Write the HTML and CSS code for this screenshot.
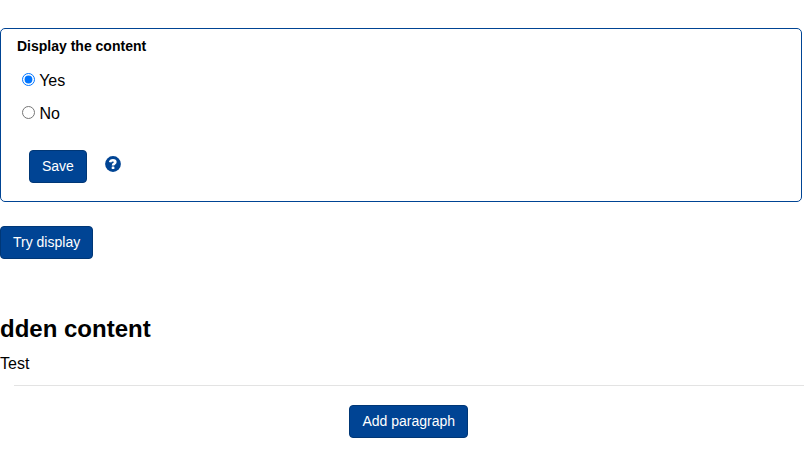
FILE: index.html
```html
<!DOCTYPE html>
<html lang="en">
<head>
<meta charset="utf-8">
<title>Content display</title>
<link rel="stylesheet" href="styles.css">
</head>
<body>
<form class="panel">
  <div class="panel-title">Display the content</div>
  <label class="option"><input type="radio" name="display" checked> Yes</label>
  <label class="option"><input type="radio" name="display"> No</label>
  <div class="actions">
    <button type="button" class="btn">Save</button>
    <svg class="help" viewBox="0 0 16 16" aria-hidden="true">
      <circle cx="8" cy="8" r="7.900" fill="#004494"/>
      <path d="M5.100 6.200C5.400 4.800 6.400 4.300 7.900 4.300c1.600 0 2.500.6 2.500 1.700 0 1.700-2.400 1.500-2.400 3.400" fill="none" stroke="#fff" stroke-width="2.500"/>
      <rect x="6.700" y="10.400" width="2.700" height="2.700" rx=".6" fill="#fff"/>
    </svg>
  </div>
</form>
<button type="button" class="btn">Try display</button>
<h2 class="heading">dden content</h2>
<p class="text">Test</p>
<div class="footer">
  <button type="button" class="btn">Add paragraph</button>
</div>
</body>
</html>
```

FILE: styles.css
```css
* {
  box-sizing: border-box;
}

body {
  margin: 0;
  padding-top: 28px;
  overflow: hidden;
  background: #fff;
  color: #000;
  font: 16px/24px "Liberation Sans", Arial, sans-serif;
}

.panel {
  width: 802px;
  height: 174px;
  margin-bottom: 24px;
  padding: 7px 16px 0;
  border: 1px solid #004494;
  border-radius: 5px;
}

.panel-title {
  margin-bottom: 13px;
  font-size: 14px;
  font-weight: 700;
  line-height: 20px;
}

.option {
  display: block;
  height: 24px;
  margin: 0 0 9px 5px;
}

.option input {
  width: 13px;
  height: 13px;
  margin: 0;
}

.actions {
  display: flex;
  align-items: flex-start;
  gap: 18px;
  margin: 24px 0 0 12px;
}

.btn {
  display: block;
  height: 33px;
  padding: 0 12px 1px;
  border: 1px solid #003776;
  border-radius: 4px;
  background: #004494;
  color: #fff;
  font: 14px/20px "Liberation Sans", Arial, sans-serif;
}

.help {
  width: 16px;
  height: 16px;
  margin-top: 6px;
}

.heading {
  margin: 54px 0 7px;
  font-size: 24px;
  line-height: 32px;
}

.text {
  margin: 0 0 9px;
}

.footer {
  display: flex;
  justify-content: center;
  margin-left: 14px;
  padding: 19px 0.4px 0 0;
  border-top: 1px solid #e3e3e3;
}
```
